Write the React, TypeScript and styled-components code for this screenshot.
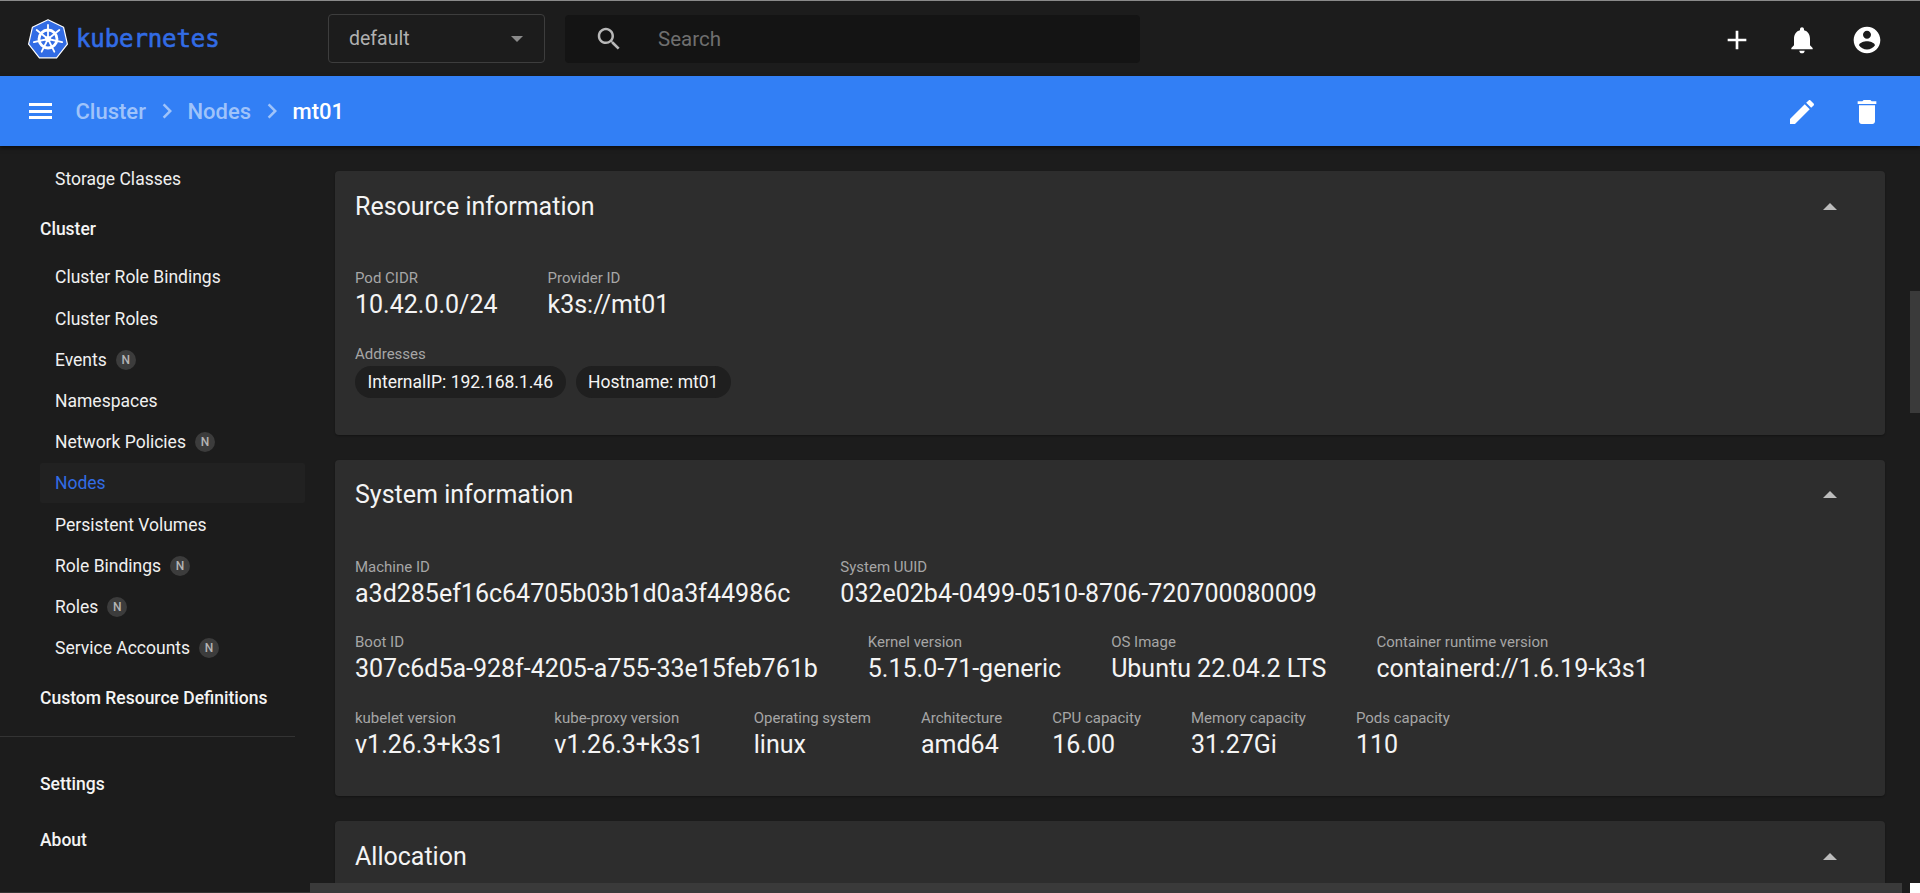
import React from "react";
import styled, { createGlobalStyle } from "styled-components";

const Global = createGlobalStyle`
  html, body { margin: 0; padding: 0; height: 100%; overflow: hidden; background: #1c1c1c; }
  * { box-sizing: border-box; }
  body { font-family: Roboto, "Liberation Sans", sans-serif; color: #fff; }
`;

const Page = styled.div`
  width: 1920px;
  height: 893px;
  display: flex;
  flex-direction: column;
  overflow: hidden;
  border-top: 1px solid #8a8a8a;
  background: #1c1c1c;
`;

const TopBar = styled.header`
  height: 75px;
  flex: none;
  display: flex;
  align-items: center;
  background: #1c1c1c;
  padding: 0 0 0 28px;
`;

const Brand = styled.div`
  width: 300px;
  flex: none;
  display: flex;
  align-items: center;
  gap: 8px;
`;

const BrandName = styled.span`
  font-family: "DejaVu Sans Mono", monospace;
  font-size: 24px;
  letter-spacing: -0.1px;
  font-weight: 400;
  color: #326ce5;
  -webkit-text-stroke: 0.6px #326ce5;
`;

const NamespaceSelect = styled.div`
  width: 217px;
  height: 49px;
  flex: none;
  border: 1px solid #3d3d3d;
  border-radius: 4px;
  display: flex;
  align-items: center;
  justify-content: space-between;
  padding: 0 21px 0 20px;
  font-size: 19.5px;
  color: #b0b0b0;
`;

const Caret = styled.span<{ $up?: boolean }>`
  width: 0;
  height: 0;
  border-left: ${(p) => (p.$up ? "7px" : "6px")} solid transparent;
  border-right: ${(p) => (p.$up ? "7px" : "6px")} solid transparent;
  border-top: ${(p) => (p.$up ? "0" : "6px solid #8a8a8a")};
  border-bottom: ${(p) => (p.$up ? "7px solid #bcbcbc" : "0")};
`;

const SearchBox = styled.div`
  width: 575px;
  height: 48px;
  flex: none;
  margin-left: 20px;
  background: #141414;
  border-radius: 4px;
  display: flex;
  align-items: center;
  gap: 34px;
  padding: 0 0 0 29px;
  color: #6f6f6f;
  font-size: 20.5px;
  svg { color: #b8b8b8; }
`;

const Actions = styled.div<{ $shift: number }>`
  margin-left: auto;
  display: flex;
  align-items: center;
  gap: 33px;
  padding-right: 37px;
  margin-top: ${(p) => p.$shift}px;
  color: #fff;
  svg { display: block; }
`;

const BlueBar = styled.div`
  height: 70px;
  flex: none;
  display: flex;
  align-items: center;
  padding-left: 28.5px;
  background: #327ff5;
  box-shadow: 0 2px 4px rgba(0, 0, 0, 0.6);
  position: relative;
  z-index: 2;
`;

const Burger = styled.div`
  width: 23px;
  height: 16px;
  margin-right: 24px;
  flex: none;
  border-top: 3px solid #fff;
  border-bottom: 3px solid #fff;
  position: relative;
  &::after {
    content: "";
    position: absolute;
    left: 0;
    right: 0;
    top: 3.5px;
    height: 3px;
    background: #fff;
  }
`;

const Crumb = styled.span<{ $current?: boolean }>`
  font-size: 22px;
  font-weight: 500;
  color: ${(p) => (p.$current ? "#fff" : "#9fc3fa")};
`;

const CrumbSep = styled.span`
  display: flex;
  width: 41.5px;
  justify-content: center;
  color: #9fc3fa;
  svg { display: block; }
`;

const Body = styled.div`
  flex: 1;
  min-height: 0;
  display: flex;
  position: relative;
`;

const Sidebar = styled.nav`
  width: 310px;
  flex: none;
  display: flex;
  flex-direction: column;
  padding-top: 13px;
  background: #1c1c1c;
  border-bottom: 1px solid #333;
`;

const SubItem = styled.div<{ $active?: boolean }>`
  height: 40px;
  flex: none;
  margin: 0 5px 1.2px 40px;
  padding-left: 15px;
  display: flex;
  align-items: center;
  gap: 9px;
  font-size: 17.5px;
  color: ${(p) => (p.$active ? "#326ce5" : "#f0f0f0")};
  background: ${(p) => (p.$active ? "#212121" : "transparent")};
  border-radius: 2px;
`;

const Section = styled.div<{ $after?: number; $before?: number }>`
  height: 30px;
  flex: none;
  margin: ${(p) => p.$before ?? 0}px 0 ${(p) => p.$after ?? 0}px 40px;
  display: flex;
  align-items: center;
  font-size: 17.5px;
  font-weight: 500;
  color: #f4f4f4;
`;

const Badge = styled.span`
  width: 20px;
  height: 20px;
  border-radius: 50%;
  background: #3c3c3c;
  color: #b4b4b4;
  font-size: 12px;
  font-weight: 500;
  display: flex;
  align-items: center;
  justify-content: center;
`;

const Rule = styled.div`
  height: 1px;
  width: 295px;
  flex: none;
  background: #333;
  margin: 23px 0 32px;
`;

const Main = styled.main`
  flex: 1;
  min-width: 0;
  display: flex;
  flex-direction: column;
  gap: 25px;
  padding: 25px 35px 0 25px;
  overflow: hidden;
`;

const Card = styled.section`
  flex: none;
  background: #2d2d2d;
  border-radius: 4px;
  padding: 0 20px;
  box-shadow: 0 1px 2px rgba(0, 0, 0, 0.3);
`;

const CardHead = styled.div`
  height: 70px;
  display: flex;
  align-items: center;
  justify-content: space-between;
  font-size: 25px;
  color: #f4f4f4;
  padding-right: 28px;
`;

const CardBody = styled.div<{ $pad: number }>`
  padding: 28px 0 ${(p) => p.$pad}px;
  display: flex;
  flex-direction: column;
  gap: 23.5px;
`;

const Row = styled.div<{ $gap: number }>`
  display: flex;
  gap: ${(p) => p.$gap}px;
`;

const Field = styled.div`
  display: flex;
  flex-direction: column;
`;

const Label = styled.div`
  font-size: 15px;
  line-height: 19px;
  color: #a6a6a6;
`;

const Value = styled.div`
  font-size: 25px;
  line-height: 33px;
  color: #f4f4f4;
`;

const Chips = styled.div`
  display: flex;
  gap: 10px;
  margin-top: 2.5px;
`;

const Chip = styled.span`
  height: 32px;
  padding: 0 12.5px;
  border-radius: 16px;
  background: #1f1f1f;
  font-size: 17.5px;
  color: #f4f4f4;
  display: flex;
  align-items: center;
`;

const VScrollThumb = styled.div`
  position: absolute;
  top: 145px;
  right: 0;
  width: 10px;
  height: 122px;
  background: #3a3a3a;
`;

const HScroll = styled.div`
  position: absolute;
  left: 310px;
  width: 1592px;
  bottom: 0;
  height: 10px;
  background: #3a3a3a;
`;

const ScrollCorner = styled.div`
  position: absolute;
  right: 0;
  bottom: 0;
  width: 10px;
  height: 10px;
  background: #fff;
`;

const Logo = () => (
  <svg width="40" height="40" viewBox="0 0 40 40" style={{ flex: "none" }}>
    <path d="M20 .8 35.6 8.3 39.4 25.2 28.6 38.8H11.4L.6 25.2 4.4 8.3Z" fill="#326ce5" stroke="#fff" strokeWidth="1.2" strokeLinejoin="round" />
    <g stroke="#fff" fill="none">
      <circle cx="20" cy="20" r="9" strokeWidth="2.8" />
      <circle cx="20" cy="20" r="2.2" strokeWidth="1.6" />
      <path d="M20 20V6M20 20 31.3 11M20 20 34.1 23.2M20 20 26.3 32.7M20 20 13.7 32.7M20 20 5.9 23.2M20 20 8.7 11" strokeWidth="1.8" strokeLinecap="round" />
    </g>
  </svg>
);

const Icon = ({ d, size = 24 }: { d: string; size?: number }) => (
  <svg width={size} height={size} viewBox="0 0 24 24" fill="currentColor"><path d={d} /></svg>
);

const SEARCH = "M15.5 14h-.79l-.28-.27C15.41 12.59 16 11.11 16 9.5 16 5.91 13.09 3 9.5 3S3 5.91 3 9.5 5.91 16 9.5 16c1.61 0 3.09-.59 4.23-1.57l.27.28v.79l5 4.99L20.49 19l-4.99-5zm-6 0C7.01 14 5 11.99 5 9.5S7.01 5 9.5 5 14 7.01 14 9.5 11.99 14 9.5 14z";
const PLUS = "M19 13h-6v6h-2v-6H5v-2h6V5h2v6h6v2z";
const BELL = "M12 22c1.1 0 2-.9 2-2h-4c0 1.1.89 2 2 2zm6-6v-5c0-3.07-1.64-5.64-4.5-6.32V4c0-.83-.67-1.5-1.5-1.5s-1.5.67-1.5 1.5v.68C7.63 5.36 6 7.92 6 11v5l-2 2v1h16v-1l-2-2z";
const ACCOUNT = "M12 2C6.48 2 2 6.48 2 12s4.48 10 10 10 10-4.48 10-10S17.52 2 12 2zm0 3c1.66 0 3 1.34 3 3s-1.34 3-3 3-3-1.34-3-3 1.34-3 3-3zm0 14.2c-2.5 0-4.71-1.28-6-3.22.03-1.99 4-3.08 6-3.08 1.99 0 5.97 1.09 6 3.08-1.29 1.94-3.5 3.22-6 3.22z";
const EDIT = "M3 17.25V21h3.75L17.81 9.94l-3.75-3.75L3 17.25zM20.71 7.04c.39-.39.39-1.02 0-1.41l-2.34-2.34c-.39-.39-1.02-.39-1.41 0l-1.83 1.83 3.75 3.75 1.83-1.83z";
const TRASH = "M6 19c0 1.1.9 2 2 2h8c1.1 0 2-.9 2-2V7H6v12zM19 4h-3.5l-1-1h-5l-1 1H5v2h14V4z";
const CHEVRON = "M10 6 8.59 7.41 13.17 12l-4.58 4.59L10 18l6-6z";

const items: { name: string; badge?: boolean; active?: boolean }[] = [
  { name: "Cluster Role Bindings" },
  { name: "Cluster Roles" },
  { name: "Events", badge: true },
  { name: "Namespaces" },
  { name: "Network Policies", badge: true },
  { name: "Nodes", active: true },
  { name: "Persistent Volumes" },
  { name: "Role Bindings", badge: true },
  { name: "Roles", badge: true },
  { name: "Service Accounts", badge: true },
];

const FieldRow = ({ gap, fields }: { gap: number; fields: [string, string][] }) => (
  <Row $gap={gap}>
    {fields.map(([l, v]) => (
      <Field key={l}>
        <Label>{l}</Label>
        <Value>{v}</Value>
      </Field>
    ))}
  </Row>
);

export default function App() {
  return (
    <Page>
      <Global />
      <TopBar>
        <Brand>
          <Logo />
          <BrandName>kubernetes</BrandName>
        </Brand>
        <NamespaceSelect>
          default
          <Caret />
        </NamespaceSelect>
        <SearchBox>
          <Icon d={SEARCH} size={30} />
          Search
        </SearchBox>
        <Actions $shift={3}>
          <Icon d={PLUS} size={32} />
          <Icon d={BELL} size={32} />
          <Icon d={ACCOUNT} size={32} />
        </Actions>
      </TopBar>
      <BlueBar>
        <Burger />
        <Crumb>Cluster</Crumb>
        <CrumbSep><Icon d={CHEVRON} size={30} /></CrumbSep>
        <Crumb>Nodes</Crumb>
        <CrumbSep><Icon d={CHEVRON} size={30} /></CrumbSep>
        <Crumb $current>mt01</Crumb>
        <Actions $shift={2}>
          <Icon d={EDIT} size={32} />
          <Icon d={TRASH} size={32} />
        </Actions>
      </BlueBar>
      <Body>
        <Sidebar>
          <SubItem>Storage Classes</SubItem>
          <Section $before={13.8} $after={13.5}>Cluster</Section>
          {items.map((i) => (
            <SubItem key={i.name} $active={i.active}>
              {i.name}
              {i.badge && <Badge>N</Badge>}
            </SubItem>
          ))}
          <Section $before={13.5}>Custom Resource Definitions</Section>
          <Rule />
          <Section $after={26}>Settings</Section>
          <Section>About</Section>
        </Sidebar>
        <Main>
          <Card>
            <CardHead>Resource information<Caret $up /></CardHead>
            <CardBody $pad={36.5}>
              <FieldRow gap={50} fields={[["Pod CIDR", "10.42.0.0/24"], ["Provider ID", "k3s://mt01"]]} />
              <Field>
                <Label>Addresses</Label>
                <Chips>
                  <Chip>InternalIP: 192.168.1.46</Chip>
                  <Chip>Hostname: mt01</Chip>
                </Chips>
              </Field>
            </CardBody>
          </Card>
          <Card>
            <CardHead>System information<Caret $up /></CardHead>
            <CardBody $pad={35.5}>
              <FieldRow gap={50} fields={[["Machine ID", "a3d285ef16c64705b03b1d0a3f44986c"], ["System UUID", "032e02b4-0499-0510-8706-720700080009"]]} />
              <FieldRow gap={50} fields={[["Boot ID", "307c6d5a-928f-4205-a755-33e15feb761b"], ["Kernel version", "5.15.0-71-generic"], ["OS Image", "Ubuntu 22.04.2 LTS"], ["Container runtime version", "containerd://1.6.19-k3s1"]]} />
              <FieldRow gap={50} fields={[["kubelet version", "v1.26.3+k3s1"], ["kube-proxy version", "v1.26.3+k3s1"], ["Operating system", "linux"], ["Architecture", "amd64"], ["CPU capacity", "16.00"], ["Memory capacity", "31.27Gi"], ["Pods capacity", "110"]]} />
            </CardBody>
          </Card>
          <Card>
            <CardHead>Allocation<Caret $up /></CardHead>
            <CardBody $pad={40} />
          </Card>
        </Main>
        <VScrollThumb />
        <HScroll />
        <ScrollCorner />
      </Body>
    </Page>
  );
}
